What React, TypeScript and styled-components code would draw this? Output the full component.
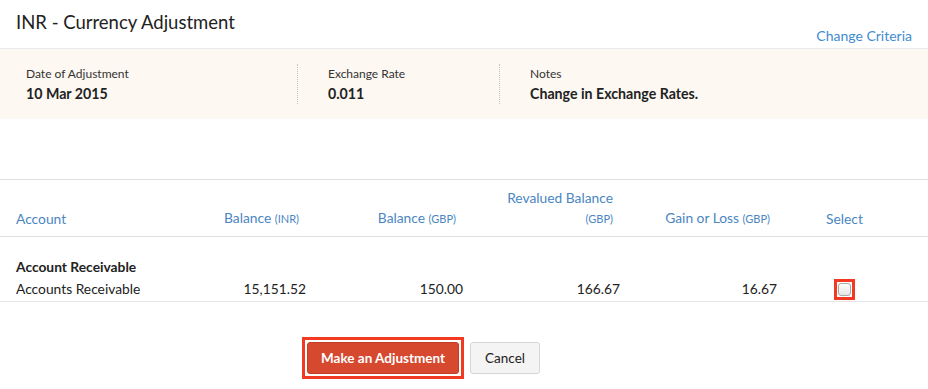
import React from "react";
import styled, { createGlobalStyle } from "styled-components";

const Global = createGlobalStyle`
  html, body { margin: 0; padding: 0; background: #fff; }
  body { font-family: Lato, "Open Sans", sans-serif; color: #222; }
  * { box-sizing: border-box; }
`;

const Page = styled.div`
  width: 928px;
  height: 389px;
  background: #fff;
  display: flex;
  flex-direction: column;
`;

const Header = styled.div`
  height: 49px;
  border-bottom: 1px solid #ebebeb;
  display: flex;
  justify-content: space-between;
  padding: 0 16px;
`;

const Title = styled.h1`
  margin: 0;
  padding-top: 11px;
  font-size: 18.5px;
  font-weight: 400;
  line-height: 22px;
  color: #222;
`;

const LinkText = styled.a`
  align-self: flex-end;
  padding-bottom: 3px;
  font-size: 14px;
  line-height: 18px;
  color: #408dd0;
  text-decoration: none;
  cursor: pointer;
`;

const Details = styled.div`
  background: #fdf8f2;
  height: 70px;
  display: flex;
  align-items: center;
`;

const DetailCol = styled.div<{ $w?: number; $divider?: boolean }>`
  width: ${(p) => (p.$w ? `${p.$w}px` : "auto")};
  flex: ${(p) => (p.$w ? "none" : "1")};
  padding-left: ${(p) => (p.$divider ? "30px" : "26px")};
  border-left: ${(p) => (p.$divider ? "1px dotted #c9c4bd" : "none")};
  height: 40px;
  display: flex;
  flex-direction: column;
  justify-content: center;
  gap: 3px;
`;

const DetailLabel = styled.div`
  font-size: 12px;
  line-height: 16px;
  color: #333;
`;

const DetailValue = styled.div`
  font-size: 14.2px;
  line-height: 18px;
  font-weight: 700;
  color: #222;
`;

const Spacer = styled.div`
  height: 60px;
`;

const Grid = styled.div`
  display: grid;
  grid-template-columns: 133px 157px 157px 157px 157px 1fr;
  padding: 0 16px;
`;

const HeadRow = styled(Grid)`
  border-top: 1px solid #e0e0e0;
  border-bottom: 1px solid #e0e0e0;
  padding-top: 8px;
  padding-bottom: 7px;
  align-items: end;
`;

const HeadCell = styled.div<{ $align?: "left" | "right" | "center" }>`
  text-align: ${(p) => p.$align || "right"};
  padding-right: ${(p) => (p.$align === "right" || !p.$align ? "7px" : "0")};
  font-size: 13.8px;
  line-height: 20px;
  color: #4a86c2;
`;

const Unit = styled.span`
  font-size: 11px;
`;

const Body = styled.div`
  padding-top: 20px;
  border-bottom: 1px solid #e6e6e6;
`;

const GroupLabel = styled.div`
  padding: 0 16px;
  font-size: 13.8px;
  line-height: 20px;
  font-weight: 700;
  color: #222;
`;

const DataRow = styled(Grid)`
  height: 24px;
  align-items: center;
`;

const Cell = styled.div<{ $align?: "left" | "right" | "center" }>`
  text-align: ${(p) => p.$align || "right"};
  font-size: 13.8px;
  line-height: 20px;
  color: #222;
  display: flex;
  justify-content: ${(p) =>
    p.$align === "left" ? "flex-start" : p.$align === "center" ? "center" : "flex-end"};
`;

const Highlight = styled.span<{ $pad: number }>`
  display: inline-flex;
  border: 3px solid #f23a22;
  padding: ${(p) => p.$pad}px;
`;

const CheckBox = styled.span`
  width: 13px;
  height: 13px;
  border: 1px solid #a9a9a9;
  border-radius: 3px;
  background: linear-gradient(#fdfdfd, #e6e6e6);
  display: block;
`;

const Actions = styled.div`
  display: flex;
  align-items: center;
  gap: 6px;
  padding-left: 302px;
  padding-top: 35px;
`;

const Button = styled.button<{ $primary?: boolean }>`
  height: 32px;
  padding: 0 ${(p) => (p.$primary ? "13px" : "14px")};
  border-radius: 3px;
  border: 1px solid ${(p) => (p.$primary ? "#c23d26" : "#d6d6d6")};
  background: ${(p) => (p.$primary ? "#d6492f" : "#f4f4f4")};
  color: ${(p) => (p.$primary ? "#fff" : "#222")};
  font-family: Lato, "Open Sans", sans-serif;
  font-size: 13.5px;
  font-weight: ${(p) => (p.$primary ? 700 : 400)};
  cursor: pointer;
`;

export default function App() {
  return (
    <Page>
      <Global />
      <Header>
        <Title>INR - Currency Adjustment</Title>
        <LinkText>Change Criteria</LinkText>
      </Header>
      <Details>
        <DetailCol $w={297}>
          <DetailLabel>Date of Adjustment</DetailLabel>
          <DetailValue>10 Mar 2015</DetailValue>
        </DetailCol>
        <DetailCol $w={202} $divider>
          <DetailLabel>Exchange Rate</DetailLabel>
          <DetailValue>0.011</DetailValue>
        </DetailCol>
        <DetailCol $divider>
          <DetailLabel>Notes</DetailLabel>
          <DetailValue>Change in Exchange Rates.</DetailValue>
        </DetailCol>
      </Details>
      <Spacer />
      <HeadRow>
        <HeadCell $align="left">Account</HeadCell>
        <HeadCell>
          Balance <Unit>(INR)</Unit>
        </HeadCell>
        <HeadCell>
          Balance <Unit>(GBP)</Unit>
        </HeadCell>
        <HeadCell>
          Revalued Balance
          <br />
          <Unit>(GBP)</Unit>
        </HeadCell>
        <HeadCell>
          Gain or Loss <Unit>(GBP)</Unit>
        </HeadCell>
        <HeadCell $align="center">Select</HeadCell>
      </HeadRow>
      <Body>
        <GroupLabel>Account Receivable</GroupLabel>
        <DataRow>
          <Cell $align="left">Accounts Receivable</Cell>
          <Cell>15,151.52</Cell>
          <Cell>150.00</Cell>
          <Cell>166.67</Cell>
          <Cell>16.67</Cell>
          <Cell $align="center">
            <Highlight $pad={1}>
              <CheckBox />
            </Highlight>
          </Cell>
        </DataRow>
      </Body>
      <Actions>
        <Highlight $pad={2}>
          <Button $primary>Make an Adjustment</Button>
        </Highlight>
        <Button>Cancel</Button>
      </Actions>
    </Page>
  );
}
